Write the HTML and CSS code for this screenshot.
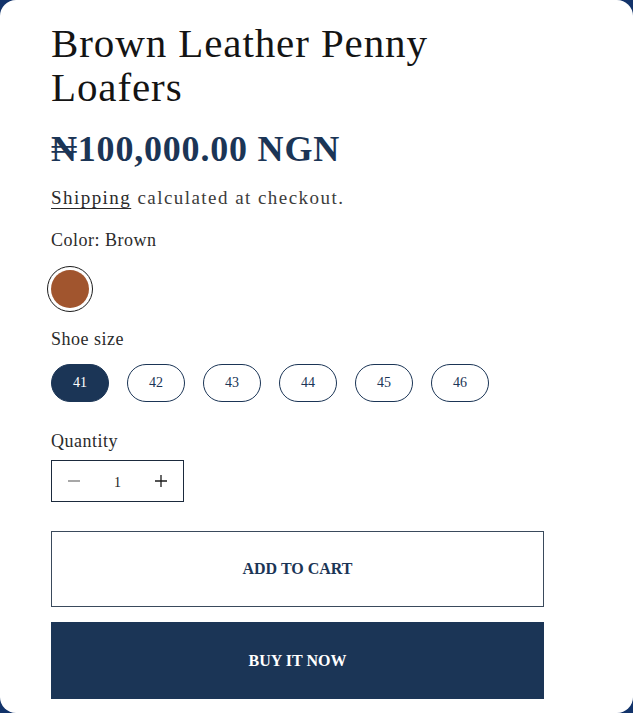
FILE: index.html
```html
<!DOCTYPE html>
<html lang="en">
  <head>
    <meta charset="UTF-8" />
    <meta name="viewport" content="width=device-width, initial-scale=1.0" />
    <title>Brown Leather Penny Loafers</title>
    <link rel="stylesheet" href="styles.css">
  </head>
  <body>
    <div class="product-card">
      <h1 class="product-title">Brown Leather Penny Loafers</h1>
      <p class="price">&#8358;100,000.00 NGN</p>
      <p class="tax-note"><a href="#">Shipping</a> calculated at checkout.</p>

      <p class="option-label">Color: Brown</p>
      <div class="swatches">
        <span class="swatch selected" title="Brown"></span>
      </div>

      <p class="option-label size-label">Shoe size</p>
      <div class="sizes">
        <button class="size-pill active">41</button>
        <button class="size-pill">42</button>
        <button class="size-pill">43</button>
        <button class="size-pill">44</button>
        <button class="size-pill">45</button>
        <button class="size-pill">46</button>
      </div>

      <p class="option-label qty-label">Quantity</p>
      <div class="quantity">
        <button class="qty-btn minus" aria-label="Decrease quantity">
          <svg width="12" height="12" viewBox="0 0 12 12"><path d="M0 6h12" /></svg>
        </button>
        <span class="qty-value">1</span>
        <button class="qty-btn" aria-label="Increase quantity">
          <svg width="12" height="12" viewBox="0 0 12 12"><path d="M0 6h12M6 0v12" /></svg>
        </button>
      </div>

      <button class="cart-btn add-to-cart">ADD TO CART</button>
      <button class="cart-btn buy-now">BUY IT NOW</button>
    </div>
  </body>
</html>
```

FILE: styles.css
```css
body {
  margin: 0;
  background: #12336a;
  font-family: "Liberation Serif", "DejaVu Serif", serif;
  color: #222;
}
p {
  margin: 0;
}
.product-card {
  box-sizing: border-box;
  min-height: 100vh;
  background: #fff;
  border-radius: 16px;
  padding: 21px 89px 14px 51px;
}
.product-title {
  margin: 0;
  font-size: 41px;
  line-height: 44px;
  font-weight: normal;
  letter-spacing: 0.9px;
  color: #141414;
}
.price {
  margin-top: 18px;
  font-size: 36px;
  line-height: 44px;
  font-weight: bold;
  letter-spacing: 0.8px;
  color: #1b3556;
}
.tax-note {
  margin-top: 15px;
  font-size: 19px;
  line-height: 24px;
  letter-spacing: 1.45px;
  color: #3c3c3c;
}
.tax-note a {
  color: #2a2a2a;
  text-decoration: underline;
  text-underline-offset: 4px;
  text-decoration-thickness: 1px;
}
.option-label {
  margin-top: 18px;
  font-size: 18px;
  line-height: 24px;
  letter-spacing: 0.5px;
  color: #2b2b2b;
}
.swatches {
  margin-top: 14px;
  margin-left: -4px;
  display: flex;
}
.swatch {
  box-sizing: border-box;
  width: 46px;
  height: 46px;
  border-radius: 50%;
  border: 1.5px solid #1c1c1c;
  padding: 3px;
  background: #a1552e;
  background-clip: content-box;
}
.size-label {
  margin-top: 15px;
}
.sizes {
  margin-top: 13px;
  display: flex;
  gap: 18px;
}
.size-pill {
  width: 58px;
  height: 38px;
  border: 1.5px solid #1b3556;
  border-radius: 19px;
  background: #fff;
  color: #1b3556;
  font-family: inherit;
  font-size: 14px;
  padding: 0;
}
.size-pill.active {
  background: #1b3556;
  color: #fff;
}
.qty-label {
  margin-top: 27px;
}
.quantity {
  margin-top: 7px;
  box-sizing: border-box;
  width: 133px;
  height: 42px;
  border: 1.5px solid #1b2a3d;
  display: grid;
  grid-template-columns: 1fr 1fr 1fr;
  align-items: center;
}
.qty-btn {
  border: none;
  background: none;
  padding: 0;
  display: flex;
  justify-content: center;
  align-items: center;
  height: 100%;
}
.qty-btn svg {
  stroke: #1b1b1b;
  stroke-width: 1.3;
  fill: none;
}
.qty-btn.minus svg {
  stroke: #777;
}
.qty-value {
  text-align: center;
  font-size: 14px;
  color: #222;
  padding-top: 4px;
}
.cart-btn {
  display: block;
  box-sizing: border-box;
  width: 100%;
  font-family: inherit;
  font-size: 16px;
  font-weight: bold;
  padding: 0;
}
.add-to-cart {
  margin-top: 29px;
  height: 76px;
  background: #fff;
  color: #1b3556;
  border: 1.5px solid #3a4a5c;
}
.buy-now {
  margin-top: 15px;
  height: 77px;
  background: #1b3556;
  color: #fff;
  border: none;
}
```
